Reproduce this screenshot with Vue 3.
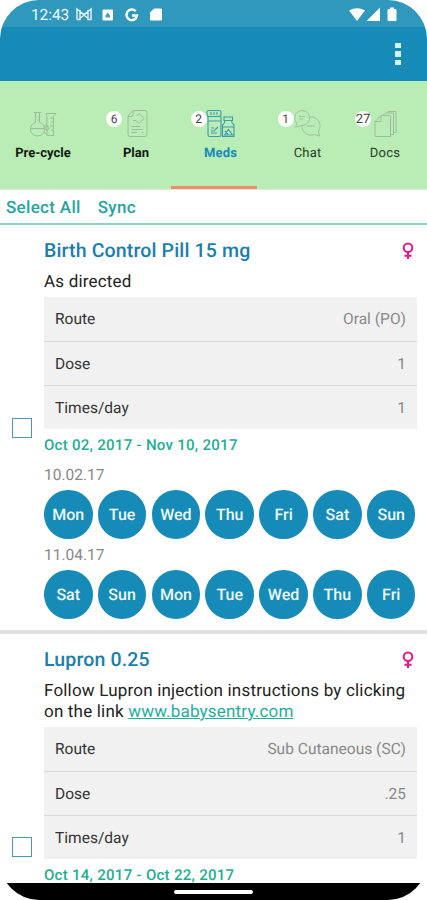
<script setup>
const tabs = [
  { id: 'pre', label: 'Pre-cycle', count: null },
  { id: 'plan', label: 'Plan', count: 6 },
  { id: 'meds', label: 'Meds', count: 2 },
  { id: 'chat', label: 'Chat', count: 1 },
  { id: 'docs', label: 'Docs', count: 27 },
]
const meds = [
  {
    name: 'Birth Control Pill 15 mg', note: 'As directed', link: '',
    rows: [['Route', 'Oral (PO)'], ['Dose', '1'], ['Times/day', '1']],
    range: 'Oct 02, 2017 - Nov 10, 2017',
    weeks: [
      { date: '10.02.17', days: ['Mon', 'Tue', 'Wed', 'Thu', 'Fri', 'Sat', 'Sun'] },
      { date: '11.04.17', days: ['Sat', 'Sun', 'Mon', 'Tue', 'Wed', 'Thu', 'Fri'] },
    ],
  },
  {
    name: 'Lupron 0.25', note: 'Follow Lupron injection instructions by clicking on the link', link: 'www.babysentry.com',
    rows: [['Route', 'Sub Cutaneous (SC)'], ['Dose', '.25'], ['Times/day', '1']],
    range: 'Oct 14, 2017 - Oct 22, 2017',
    weeks: [],
  },
]
</script>

<template>
  <div class="phone">
    <header class="status">
      <span class="time">12:43</span>
      <svg class="s-left" width="90" height="16" viewBox="0 0 90 16">
        <path d="M1 12.500H4V3M1 12.500V2L8 7.500L15 2V12.500H12V3M4.500 11L11.500 5M4.500 5L11.500 11" fill="none" stroke="#e0f1f8" stroke-width="1.500" />
        <rect x="26.500" y="2.500" width="10.500" height="11" rx="1" fill="#fff" />
        <path d="M29.500 10.500V8.500L31.700 5.500L34 8.500V10.500Z" fill="#4d9fbd" />
        <path d="M59.700 4.300A5.300 5.300 0 1 0 61 8.500H56" fill="none" stroke="#fff" stroke-width="2.400" />
        <path d="M78 1.500H85Q86 1.500 86 2.500V12.500Q86 13.500 85 13.500H75Q74 13.500 74 12.500V5.500Z" fill="#fff" />
      </svg>
      <svg class="s-right" width="50" height="16" viewBox="0 0 50 16">
        <path d="M1 3.500Q9-1 17 3.500L9 14Z" fill="#fff" />
        <path d="M18.500 14L32 .5V14Z" fill="#fff" />
        <path d="M42 .5H46V2H47.500Q48.500 2 48.500 3.500V13Q48.500 14 47.500 14H40.500Q39.500 14 39.500 13V3.500Q39.500 2 40.500 2H42Z" fill="#fff" />
      </svg>
    </header>
    <div class="appbar">
      <div class="more"><i /><i /><i /></div>
    </div>
    <nav class="tabs">
      <div v-for="t in tabs" :key="t.id" class="tab" :class="t.id">
        <div class="pic">
          <span v-if="t.count" class="count">{{ t.count }}</span>
          <svg width="30" height="30" viewBox="0 0 30 30" fill="none" stroke="currentColor" stroke-width="1">
            <g v-if="t.id === 'pre'">
              <path d="M6 3.500H13M7.500 4V13.500Q2.500 15 2.500 20Q2.500 26.500 9.500 27Q16.500 26.500 16.500 20Q16.500 15 11.500 13.500V4M3 19.500H16M9.500 8H11.500M9.500 11H11.500" />
              <path d="M18 4.500H28Q25.500 6.500 25.500 9V26.500H19V9Q19 6.500 18 4.500M22 9H25M23 13H25M22 17H25M23 21H25M16 17L19 15.500M16 23L19 25" />
              <circle cx="19" cy="19" r="2" />
            </g>
            <g v-else-if="t.id === 'plan'">
              <path d="M12 1.500H24Q26 1.500 26 3.500V25.500Q26 27.500 24 27.500H9Q7 27.500 7 25.500V7ZM7 7.500H10Q12 7.500 12 5.500V1.500" />
              <path d="M18 4.500L23 9.500L18 14.500L15 11.500H12M15.500 7L18 4.500M10.500 17.500H19M10.500 20.500H21.500M10.500 23.500H16M20.500 23.500H22.500" />
            </g>
            <g v-else-if="t.id === 'meds'" stroke-width="1.100">
              <rect x="1" y="1.500" width="14" height="6" rx="2" />
              <path d="M2 7.500V26Q2 27.500 4 27.500H13Q15 27.500 15 26V7.500M2 12H15M5 3V6M8 3V6M11 3V6M5 22H8L12 18M5 24H11M5 19H8" />
              <path d="M18 8H26.500V11.500H18ZM19 11.500Q19 14 16.500 16V27.500H28V16Q25.500 14 25.500 11.500M17 18H28M18.500 26L22.500 20.500L26.500 26ZM19 22L22 25" />
            </g>
            <g v-else-if="t.id === 'chat'" stroke-width=".9">
              <path d="M4 14.500A7.500 7.500 0 1 1 9 16.500L2.500 18ZM6 7.500H12M6 10H10" />
              <path d="M16.500 8.200A9 9 0 0 1 25.500 22L26.500 27L21.500 25.500A9 9 0 0 1 9 16.500M14 17H22" />
            </g>
            <g v-else>
              <path d="M11 6.500H20.500V27.500H5V12.500L11 6.500V12.500H5M13.500 6.500V5.500L16 4H23.500V25.500H20.500M18 4V2.500H26V23.500H23.500" />
            </g>
          </svg>
        </div>
        <span class="label">{{ t.label }}</span>
      </div>
    </nav>
    <div class="tools"><span>Select All</span><span>Sync</span></div>
    <main class="list">
      <article v-for="m in meds" :key="m.name" class="med">
        <div class="side"><i class="box" /></div>
        <div class="body">
          <div class="title">
            <h2>{{ m.name }}</h2>
            <svg width="12" height="18" viewBox="0 0 12 18" fill="none" stroke="#e6168b" stroke-width="2">
              <circle cx="6" cy="5.800" r="4.300" /><path d="M6 10V17M2.500 13.700H9.500" />
            </svg>
          </div>
          <p class="note">{{ m.note }} <a v-if="m.link">{{ m.link }}</a></p>
          <dl>
            <div v-for="r in m.rows" :key="r[0]" class="row"><dt>{{ r[0] }}</dt><dd>{{ r[1] }}</dd></div>
          </dl>
          <div class="range">{{ m.range }}</div>
          <section v-for="w in m.weeks" :key="w.date" class="week">
            <div class="date">{{ w.date }}</div>
            <div class="days"><span v-for="d in w.days" :key="d">{{ d }}</span></div>
          </section>
        </div>
      </article>
    </main>
    <footer class="navbar"><i /></footer>
  </div>
</template>

<style>
body { margin: 0; background: #fff; }
</style>
<style scoped>
.phone { width: 427px; height: 900px; display: flex; flex-direction: column; overflow: hidden; border-radius: 39px; background: #fff; font-family: Roboto, "Liberation Sans", sans-serif; text-rendering: geometricPrecision; }
.status { flex: none; height: 27px; background: #3097bd; display: flex; align-items: center; padding: 2px 29px 0 31px; box-sizing: border-box; color: #f0faff; }
.time { font-size: 15.500px; width: 45px; letter-spacing: -.1px; white-space: nowrap; }
.s-right { margin-left: auto; }
.appbar { flex: none; height: 54px; background: #168bb7; display: flex; justify-content: flex-end; align-items: center; padding-right: 26px; box-sizing: border-box; }
.more { display: grid; gap: 3px; }
.more i { width: 6px; height: 5.500px; background: #d5f1fb; }
.tabs { flex: none; height: 109px; background: #baecb5; display: grid; grid-template-columns: 86px 85px 86px 86px 84px; border-bottom: 1px solid #dee7dd; box-sizing: border-box; }
.tab { display: flex; flex-direction: column; align-items: center; padding-top: 28px; box-sizing: border-box; color: #9bbd9c; }
.pic { position: relative; width: 30px; height: 30px; }
.pic svg { display: block; }
.count { position: absolute; left: -15px; top: 2px; width: 16px; height: 16px; border-radius: 50%; background: #fff; color: #444; font-size: 12px; line-height: 16px; display: flex; justify-content: center; }
.label { margin-top: 6px; font-size: 13px; line-height: 18px; color: #283d28; letter-spacing: .2px; }
.pre .label, .plan .label { color: #101810; font-weight: 700; letter-spacing: 0; }
.plan { padding-left: 15px; }
.meds { color: #3b9bad; border-bottom: 3px solid #f18b6b; padding-left: 13px; }
.meds .label { color: #168bb7; font-weight: 700; }
.chat { padding-left: 15px; }
.docs .count { font-size: 13px; line-height: 17px; }
.tools { flex: none; height: 35px; box-sizing: border-box; border-bottom: 2px solid #8fd0cb; display: flex; gap: 17px; padding-left: 6px; color: #26a69f; font-size: 17px; font-weight: 500; line-height: 37px; letter-spacing: .32px; }
.list { flex: 1; min-height: 0; overflow: hidden; }
.med { display: flex; height: 405px; }
.med + .med { height: 429px; border-top: 4px solid #e2e2e2; box-sizing: border-box; }
.side { width: 44px; flex: none; display: flex; align-items: center; padding-left: 12px; box-sizing: border-box; }
.box { width: 20px; height: 20px; border: 1px solid #4b95bd; box-sizing: border-box; }
.body { flex: 1; padding: 11px 10px 0 0; min-width: 0; }
.title { display: flex; justify-content: space-between; align-items: center; height: 28px; padding-right: 3px; }
.title svg { margin-top: 1px; }
h2 { margin: 0; font-size: 19.500px; font-weight: 500; color: #1a7eae; letter-spacing: .15px; }
.note { margin: 8px 0 4px; font-size: 17px; line-height: 21px; color: #222; letter-spacing: .19px; }
.note a { color: #1caf9a; text-decoration: underline; }
dl { margin: 0; background: #f1f1f1; }
.row { height: 44px; box-sizing: border-box; display: flex; justify-content: space-between; align-items: center; padding: 0 11px; font-size: 15.500px; letter-spacing: .02px; }
.row + .row { border-top: 1px solid #d9d9d9; }
dt { color: #333; }
dd { margin: 0; color: #888; }
.range { margin-top: 6px; font-size: 15px; line-height: 20px; color: #1caf90; font-weight: 500; letter-spacing: .28px; }
.date { font-size: 15.500px; line-height: 20px; color: #888; letter-spacing: 0; }
.week { padding-top: 10px; }
.week + .week { padding-top: 7px; }
.days { display: flex; justify-content: space-between; margin: 5px 1.500px 0 0; }
.days span { width: 48.500px; height: 48.500px; margin-bottom: -.5px; padding-top: 1px; box-sizing: border-box; border-radius: 50%; background: #168bb7; color: #ecf8fd; display: flex; align-items: center; justify-content: center; font-size: 16px; font-weight: 500; }
.navbar { flex: none; height: 17px; background: #000; display: flex; align-items: center; justify-content: center; }
.navbar i { width: 79px; height: 4px; background: #fff; border-radius: 2px; }
</style>
